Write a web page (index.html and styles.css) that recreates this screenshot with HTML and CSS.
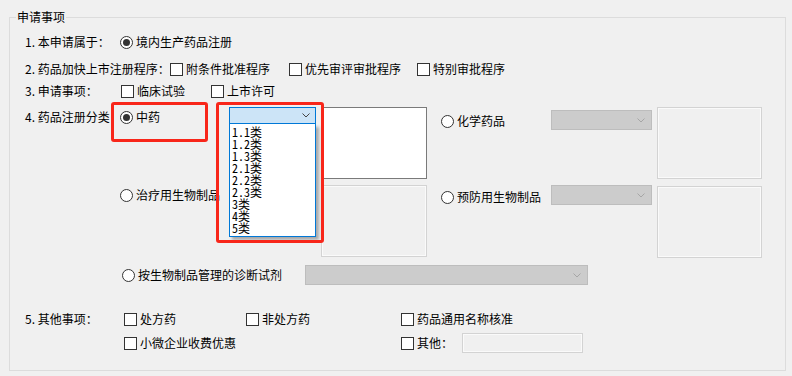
FILE: index.html
```html
<!DOCTYPE html>
<html lang="zh-CN">
<head>
<meta charset="utf-8">
<title>申请事项</title>
<link rel="stylesheet" href="styles.css">
</head>
<body>
<div class="group">
  <span class="title">申请事项</span>

  <div class="row r1">
    <span class="lbl w95">1. 本申请属于：</span>
    <span class="opt"><i class="radio on"></i>境内生产药品注册</span>
  </div>

  <div class="row r2">
    <span class="lbl w145">2. 药品加快上市注册程序：</span>
    <span class="opt w119"><i class="check"></i>附条件批准程序</span>
    <span class="opt w128"><i class="check"></i>优先审评审批程序</span>
    <span class="opt"><i class="check"></i>特别审批程序</span>
  </div>

  <div class="row r3">
    <span class="lbl w96">3. 申请事项：</span>
    <span class="opt w90"><i class="check"></i>临床试验</span>
    <span class="opt"><i class="check"></i>上市许可</span>
  </div>

  <!-- 4. 药品注册分类 -->
  <div class="cat cat-a">
    <span class="lbl w95 mt2">4. 药品注册分类</span>
    <span class="opt w109 mt2"><i class="radio on"></i>中药</span>
    <span class="combo focus w87"><svg viewBox="0 0 8 5"><polyline points="0.5,0.5 4,4 7.5,0.5"/></svg></span>
    <span class="box active tall"></span>
    <span class="opt w110 ml14 mt6"><i class="radio"></i>化学药品</span>
    <span class="combo w101 mt3"><svg viewBox="0 0 8 5"><polyline points="0.5,0.5 4,4 7.5,0.5"/></svg></span>
    <span class="box tall tall-r"></span>
  </div>

  <div class="cat cat-b">
    <span class="lbl w95"></span>
    <span class="opt w109 mt2"><i class="radio"></i>治疗用生物制品</span>
    <span class="combo w87"><svg viewBox="0 0 8 5"><polyline points="0.5,0.5 4,4 7.5,0.5"/></svg></span>
    <span class="box tall"></span>
    <span class="opt w110 ml14 mt4"><i class="radio"></i>预防用生物制品</span>
    <span class="combo w101"><svg viewBox="0 0 8 5"><polyline points="0.5,0.5 4,4 7.5,0.5"/></svg></span>
    <span class="box tall tall-r mt1"></span>
  </div>

  <div class="cat cat-c">
    <span class="lbl w97"></span>
    <span class="opt w183 mt2"><i class="radio"></i>按生物制品管理的诊断试剂</span>
    <span class="combo w283"><svg viewBox="0 0 8 5"><polyline points="0.5,0.5 4,4 7.5,0.5"/></svg></span>
  </div>

  <div class="row r5">
    <span class="lbl w99">5. 其他事项：</span>
    <span class="opt w122"><i class="check"></i>处方药</span>
    <span class="opt w155"><i class="check"></i>非处方药</span>
    <span class="opt"><i class="check"></i>药品通用名称核准</span>
  </div>

  <div class="row r6">
    <span class="lbl w99"></span>
    <span class="opt w277"><i class="check"></i>小微企业收费优惠</span>
    <span class="opt"><i class="check"></i>其他：</span>
    <span class="box line"></span>
  </div>
</div>

<!-- open list of the 中药 combobox -->
<ul class="dropdown">
  <li>1.1类</li>
  <li>1.2类</li>
  <li>1.3类</li>
  <li>2.1类</li>
  <li>2.2类</li>
  <li>2.3类</li>
  <li>3类</li>
  <li>4类</li>
  <li>5类</li>
</ul>

<div class="mark mark-radio"></div>
<div class="mark mark-list"></div>
</body>
</html>
```

FILE: styles.css
```css
body {
  margin: 0;
  width: 792px;
  height: 376px;
  overflow: hidden;
  position: relative;
  background: #f0f0f0;
  color: #000;
  font: 12px/16px "Noto Sans CJK SC", sans-serif;
}

.group {
  box-sizing: border-box;
  height: 354px;
  margin: 17px 6px 0 9px;
  padding-left: 15px;
  border: 1px solid #dcdcdc;
}
.title {
  display: block;
  width: max-content;
  margin: -9px 0 0 -9px;
  padding: 0 1px;
  background: #f0f0f0;
}

.row { display: flex; align-items: center; height: 20px; }
.row > *, .cat > * { flex: none; }
.lbl { white-space: pre; }
.r1 { margin-top: 7px; }
.r2 { margin-top: 7px; }
.r3 { margin-top: 2px; }
.r5 { margin-top: 24px; }
.r6 { margin-top: 4px; }

.cat { display: flex; align-items: flex-start; }
.cat-a { margin-top: 6px; height: 72px; }
.cat-b { margin-top: 6px; height: 72px; }
.cat-c { margin-top: 8px; height: 20px; }

.opt { display: flex; align-items: center; white-space: nowrap; }

.radio, .check {
  display: block;
  box-sizing: border-box;
  width: 13px;
  height: 13px;
  border: 1px solid #333;
  background: #fff;
}
.radio { border-radius: 50%; margin-right: 3px; position: relative; }
.radio.on::after {
  content: "";
  position: absolute;
  left: 2px;
  top: 2px;
  width: 7px;
  height: 7px;
  border-radius: 50%;
  background: #333;
}
.check { margin-right: 3px; }

.combo {
  box-sizing: border-box;
  display: flex;
  align-items: center;
  justify-content: flex-end;
  height: 20px;
  padding-right: 6px;
  border: 1px solid #bdbdbd;
  background: #cccccc;
}
.combo svg { width: 8px; height: 5px; fill: none; stroke: #a6a6a6; stroke-width: 1; }
.combo.focus {
  height: 17px;
  border-color: #0078d7;
  background: #cce4f7;
  padding-right: 5px;
}
.combo.focus svg { stroke: #444; }

.box {
  box-sizing: border-box;
  border: 1px solid #d3d3d3;
  background: #f0f0f0;
  box-shadow: inset 0 0 0 1px #fafafa;
}
.box.active { background: #fff; border-color: #7a7a7a; box-shadow: none; }
.box.tall { width: 106px; height: 72px; margin-left: 5px; }
.box.tall-r { width: 105px; }
.box.line { width: 121px; height: 20px; margin-left: 9px; }

.w87 { width: 87px; }
.w90 { width: 90px; }
.w95 { width: 95px; }
.w96 { width: 96px; }
.w97 { width: 97px; }
.w99 { width: 99px; }
.w101 { width: 101px; }
.w109 { width: 109px; }
.w110 { width: 110px; }
.w119 { width: 119px; }
.w122 { width: 122px; }
.w128 { width: 128px; }
.w145 { width: 145px; }
.w155 { width: 155px; }
.w183 { width: 183px; }
.w277 { width: 277px; }
.w283 { width: 283px; }
.mt1 { margin-top: 1px; }
.mt2 { margin-top: 2px; }
.mt3 { margin-top: 3px; }
.mt4 { margin-top: 4px; }
.mt6 { margin-top: 6px; }
.ml14 { margin-left: 14px; }

.dropdown {
  position: absolute;
  left: 229px;
  top: 124px;
  box-sizing: border-box;
  width: 87px;
  height: 113px;
  margin: 0;
  padding: 2px 0 0 2px;
  list-style: none;
  border: 1px solid #0078d7;
  border-top: none;
  background: #fff;
  box-shadow: 3px 3px 3px rgba(0, 0, 0, 0.3);
  font-family: "Noto Sans Mono CJK SC", "Noto Sans CJK SC", monospace;
  line-height: 12px;
}

.mark {
  position: absolute;
  box-sizing: border-box;
  border: 3px solid #f8261a;
  border-radius: 3px;
}
.mark-radio { left: 111px; top: 102px; width: 97px; height: 40px; }
.mark-list { left: 216px; top: 102px; width: 108px; height: 141px; }
```
